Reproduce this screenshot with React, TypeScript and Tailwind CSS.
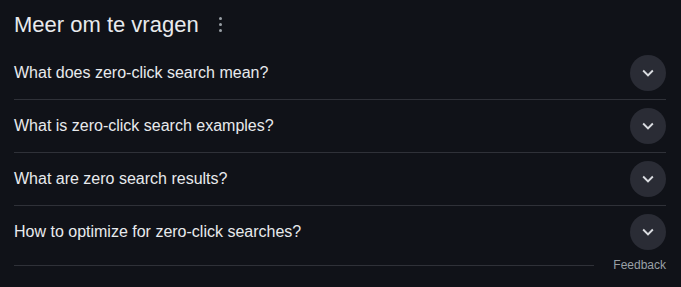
import React from "react";

const questions = [
  "What does zero-click search mean?",
  "What is zero-click search examples?",
  "What are zero search results?",
  "How to optimize for zero-click searches?",
];

function Chevron() {
  return (
    <svg width="22" height="22" viewBox="0 0 24 24" fill="none">
      <path d="M7.41 8.59 12 13.17l4.59-4.58L18 10l-6 6-6-6z" fill="#dadce0" />
    </svg>
  );
}

export default function App() {
  return (
    <div className="w-[681px] h-[287px] bg-[#101218] pl-[14px] pr-[15px] font-['Liberation_Sans',Arial,sans-serif] overflow-hidden">
      {/* Header */}
      <div className="h-[47px] flex items-center pt-[2px]">
        <h2 className="text-[22px] leading-[28px] text-[#e8eaed]">Meer om te vragen</h2>
        <div className="ml-[18px] flex flex-col gap-[3px] items-center w-[8px]">
          <span className="w-[3px] h-[3px] rounded-full bg-[#9aa0a6]" />
          <span className="w-[3px] h-[3px] rounded-full bg-[#9aa0a6]" />
          <span className="w-[3px] h-[3px] rounded-full bg-[#9aa0a6]" />
        </div>
      </div>

      {/* Questions */}
      {questions.map((q, i) => (
        <div
          key={q}
          className={`flex items-center justify-between ${
            i < questions.length - 1 ? "h-[53px] border-b border-[#2f3138]" : "h-[51px]"
          }`}
        >
          <span className="text-[16px] leading-[24px] text-[#e8eaed]">{q}</span>
          <div className="w-[36px] h-[36px] rounded-full bg-[#2a2c35] flex items-center justify-center">
            <Chevron />
          </div>
        </div>
      ))}

      {/* Footer */}
      <div className="flex items-center gap-[19px]">
        <div className="flex-1 h-px bg-[#2f3138]" />
        <span className="text-[12px] leading-[16px] text-[#9aa0a6]">Feedback</span>
      </div>
    </div>
  );
}
